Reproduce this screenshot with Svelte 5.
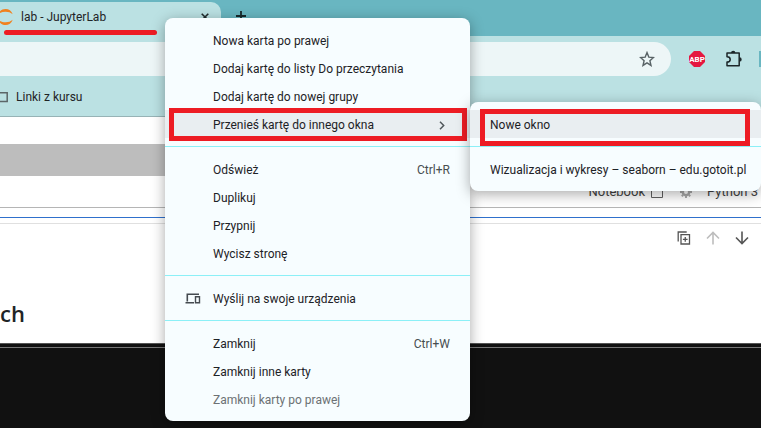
<script>
  const groups = [
    [
      { label: 'Nowa karta po prawej' },
      { label: 'Dodaj kartę do listy Do przeczytania' },
      { label: 'Dodaj kartę do nowej grupy' },
      { label: 'Przenieś kartę do innego okna', submenu: true }
    ],
    [
      { label: 'Odśwież', keys: 'Ctrl+R' },
      { label: 'Duplikuj' },
      { label: 'Przypnij' },
      { label: 'Wycisz stronę' }
    ],
    [{ label: 'Wyślij na swoje urządzenia', devices: true }],
    [
      { label: 'Zamknij', keys: 'Ctrl+W' },
      { label: 'Zamknij inne karty' },
      { label: 'Zamknij karty po prawej', disabled: true }
    ]
  ];
  const windows = [['Nowe okno'], ['Wizualizacja i wykresy – seaborn – edu.gotoit.pl']];
</script>

<div class="screen">
  <header class="tabs">
    <div class="tab">
      <svg class="jupyter" width="16" height="18" viewBox="0 0 16 18" aria-hidden="true">
        <path d="M1 6.500C2.500 2.800 5.200 1 8.500 1s6 1.800 7.200 5.300C13.800 4.600 11.400 3.800 8.500 3.800S3 4.700 1 6.500zM1 11.500C2.500 15.200 5.200 17 8.500 17s6-1.800 7.200-5.300c-1.900 1.700-4.300 2.500-7.200 2.500S3 13.300 1 11.500z" fill="#f0811f" />
      </svg>
      <span class="title">lab - JupyterLab</span>
      <button class="plain" aria-label="Zamknij kartę">
        <svg width="8" height="8" viewBox="0 0 8 8"><path d="M.7.7l6.600 6.600M7.300.7L.7 7.300" stroke="#202a2c" stroke-width="1.600" /></svg>
      </button>
      <i class="marker"></i>
    </div>
    <button class="plain add" aria-label="Nowa karta">
      <svg width="12" height="12" viewBox="0 0 12 12"><path d="M6 1v10M1 6h10" stroke="#17282b" stroke-width="1.800" /></svg>
    </button>
  </header>

  <div class="toolbar">
    <div class="address">
      <input aria-label="Adres" />
      <button class="plain" aria-label="Dodaj zakładkę">
        <svg width="16" height="16" viewBox="0 0 16 16"><path d="M8 1.600l1.800 4.500 4.700.4-3.600 3.200 1.100 4.700L8 11.900l-4 2.500 1.100-4.700L1.500 6.500l4.700-.4z" fill="none" stroke="#596366" stroke-width="1.400" /></svg>
      </button>
    </div>
    <button class="plain" aria-label="Adblock Plus">
      <svg width="16" height="16" viewBox="0 0 16 16">
        <path d="M5 0h6l5 5v6l-5 5H5l-5-5V5z" fill="#e5173f" />
        <text x="8" y="11" text-anchor="middle" font-family="Roboto, sans-serif" font-size="8" font-weight="700" fill="#fff">ABP</text>
      </svg>
    </button>
    <button class="plain" aria-label="Rozszerzenia">
      <svg width="18" height="18" viewBox="0 0 18 18">
        <path d="M2 3h12.200v12.800H2v-3.700c2.300 0 3.200-1.200 3.200-2.700S4.300 6.700 2 6.700z" fill="none" stroke="#1c2629" stroke-width="1.500" stroke-linejoin="round" />
        <path d="M6 3a2.200 2.200 0 0 1 4.400 0zM14.500 7.200a2.200 2.200 0 0 1 0 4.400z" fill="#1c2629" />
      </svg>
    </button>
    <i class="profile"></i>
  </div>

  <nav class="bookmarks">
    <a href="#linki">
      <svg width="13" height="12" viewBox="0 0 13 12" aria-hidden="true"><path d="M1 1.800h11.200v8.700H1z" fill="none" stroke="#5c6668" stroke-width="1.500" /></svg>
      Linki z kursu
    </a>
  </nav>

  <main>
    <div class="band"></div>
    <div class="status">
      <span>Notebook</span>
      <svg width="14" height="14" viewBox="0 0 14 14" aria-hidden="true"><path d="M1.500 1.500h11v11h-11z" fill="none" stroke="#616161" /></svg>
      <svg class="gear" width="12" height="12" viewBox="0 0 12 12" aria-hidden="true"><circle cx="6" cy="6" r="3.200" fill="none" stroke="#aaa" stroke-width="2.400" /><path d="M6 0v2M6 10v2M0 6h2M10 6h2M1.800 1.800l1.400 1.400M8.800 8.800l1.400 1.400M10.200 1.800L8.800 3.200M3.200 8.800l-1.400 1.400" stroke="#aaa" stroke-width="2" /></svg>
      <span>Python 3</span>
    </div>
    <div class="focus"></div>
    <section class="cell">
      <div class="tools">
        <button class="plain" aria-label="Duplikuj komórkę">
          <svg width="14" height="14" viewBox="0 0 14 14"><path d="M1.200 10.500V1h8.500M4 3.700h8.500v9.300H4zM8.250 6v4.700M5.900 8.350h4.700" fill="none" stroke="#555" stroke-width="1.300" /></svg>
        </button>
        <button class="plain" aria-label="W górę" disabled>
          <svg width="14" height="14" viewBox="0 0 14 14"><path d="M7 13.500V1.500M1 7.500l6-6 6 6" fill="none" stroke="#bdbdbd" stroke-width="1.600" /></svg>
        </button>
        <button class="plain" aria-label="W dół">
          <svg width="14" height="14" viewBox="0 0 14 14"><path d="M7 .5v12M1 6.500l6 6 6-6" fill="none" stroke="#555" stroke-width="1.600" /></svg>
        </button>
      </div>
      <h2>ch</h2>
    </section>
    <div class="output"></div>
  </main>

  <div class="menu" role="menu">
    {#each groups as group}
      <div class="group">
        {#each group as item}
          <div class="row">
            <button class="item" class:active={item.submenu} role="menuitem" disabled={item.disabled}>
              <span class="icon">
                {#if item.devices}
                  <svg width="16" height="12" viewBox="0 0 16 12"><path d="M2.300 8.500V1.200H14M.5 9.800h8.500" fill="none" stroke="#454b50" stroke-width="1.600" /><path d="M10.500 3.700h4v6.100h-4z" fill="none" stroke="#454b50" stroke-width="1.400" /></svg>
                {/if}
              </span>
              <span class="label">{item.label}</span>
              {#if item.keys}<kbd>{item.keys}</kbd>{/if}
              {#if item.submenu}
                <svg class="chevron" width="6" height="9" viewBox="0 0 6 9"><path d="M1 .8l3.700 3.700L1 8.200" fill="none" stroke="#50575b" stroke-width="1.500" /></svg>
              {/if}
            </button>
            {#if item.submenu}
              <i class="frame"></i>
              <div class="menu sub" role="menu">
                {#each windows as names, i}
                  <div class="group">
                    {#each names as name}
                      <button class="item" class:active={i === 0} role="menuitem">{name}</button>
                    {/each}
                  </div>
                {/each}
                <i class="frame wide"></i>
              </div>
            {/if}
          </div>
        {/each}
      </div>
    {/each}
  </div>
</div>

<style>
  .screen {
    position: relative;
    display: flex;
    flex-direction: column;
    min-height: 100vh;
    overflow: hidden;
    background: #fff;
    color: #1f2426;
    font: 12px/16px Roboto, 'Noto Sans', sans-serif;
  }
  .screen :global(*) { box-sizing: border-box; }
  svg { display: block; flex: none; }
  .plain {
    flex: none;
    padding: 0;
    border: 0;
    background: none;
  }
  .tabs {
    display: flex;
    height: 36px;
    padding-top: 2px;
    background: #69b6c1;
  }
  .tab {
    position: relative;
    display: flex;
    align-items: center;
    width: 221px;
    padding: 0 12px 4px 0;
    border-radius: 0 10px 0 0;
    background: #bbe1e3;
  }
  .jupyter { margin-left: -3px; }
  .title { flex: 1; margin-left: 8px; }
  .marker {
    position: absolute;
    top: 28px;
    left: 4px;
    width: 153px;
    height: 5px;
    border-radius: 3px;
    background: #ed1c24;
  }
  .add { margin: 0 0 6px 14px; }
  .toolbar {
    display: flex;
    align-items: center;
    height: 46px;
    background: #bbe1e3;
  }
  .address {
    display: flex;
    flex: 1;
    align-items: center;
    height: 34px;
    margin-right: 18px;
    padding-right: 16px;
    border-radius: 0 17px 17px 0;
    background: #edf6f7;
  }
  input {
    flex: 1;
    min-width: 0;
    border: 0;
    outline: 0;
    background: none;
  }
  .toolbar > .plain + .plain { margin: 0 16px 0 20px; }
  .profile { width: 2px; height: 16px; background: #69b6c1; }
  .bookmarks {
    display: flex;
    height: 35px;
    padding-top: 6px;
    border-bottom: 1px solid #97b3b6;
    background: #bbe1e3;
  }
  .bookmarks a {
    display: flex;
    align-items: center;
    height: 16px;
    gap: 8px;
    margin-left: -5px;
    padding-top: 1px;
    color: inherit;
    text-decoration: none;
  }
  main { display: flex; flex: 1; flex-direction: column; }
  .band { height: 32px; margin-top: 27px; background: #bdbdbd; }
  .status {
    display: flex;
    align-items: center;
    justify-content: flex-end;
    height: 32px;
    padding-right: 3px;
    border-bottom: 1px solid #b5b5b5;
    color: #424242;
    font-size: 13px;
  }
  .status svg { margin-left: 5px; }
  .status .gear { margin: 0 15px 0 16px; }
  .focus {
    height: 7px;
    margin-top: 9px;
    border-top: 1px solid #2f70cc;
    border-bottom: 1px solid #e0e0e0;
  }
  .cell { height: 119px; padding-top: 7px; }
  .tools {
    display: flex;
    justify-content: flex-end;
    gap: 15px;
    padding-right: 12px;
  }
  h2 {
    margin: 52px 0 0;
    font-family: 'Open Sans', 'Noto Sans', sans-serif;
    font-size: 22px;
    font-weight: 600;
    line-height: 32px;
  }
  .output {
    flex: 1;
    border-top: 1px solid #555;
    background: linear-gradient(#111 3px, #777 3px, #777 4px, #111 4px);
  }
  .menu {
    position: absolute;
    top: 18px;
    left: 165px;
    width: 305px;
    border-radius: 8px;
    background: #f7fdff;
    box-shadow: 0 3px 14px rgba(0, 0, 0, 0.34);
  }
  .group { padding: 8px 0; }
  .group + .group { border-top: 1px solid #8cf0f7; }
  .row { position: relative; }
  .item {
    display: flex;
    align-items: center;
    width: 100%;
    height: 28px;
    padding: 2px 20px 0;
    border: 0;
    background: none;
    color: #1d2226;
    font: inherit;
    text-align: left;
    white-space: nowrap;
  }
  .item:disabled { color: #6c7174; }
  .item.active { background: #e9eef1; }
  .icon { width: 28px; }
  .label { flex: 1; }
  kbd { color: #474d50; font: inherit; }
  .chevron { margin-right: 5px; }
  .sub { top: -8px; left: 100%; width: 291px; }
  .frame {
    position: absolute;
    inset: -2px 3px -3px 4px;
    border: 5px solid #ed1c24;
    pointer-events: none;
  }
  .wide { inset: 7px 11px 45px 10px; }
</style>
